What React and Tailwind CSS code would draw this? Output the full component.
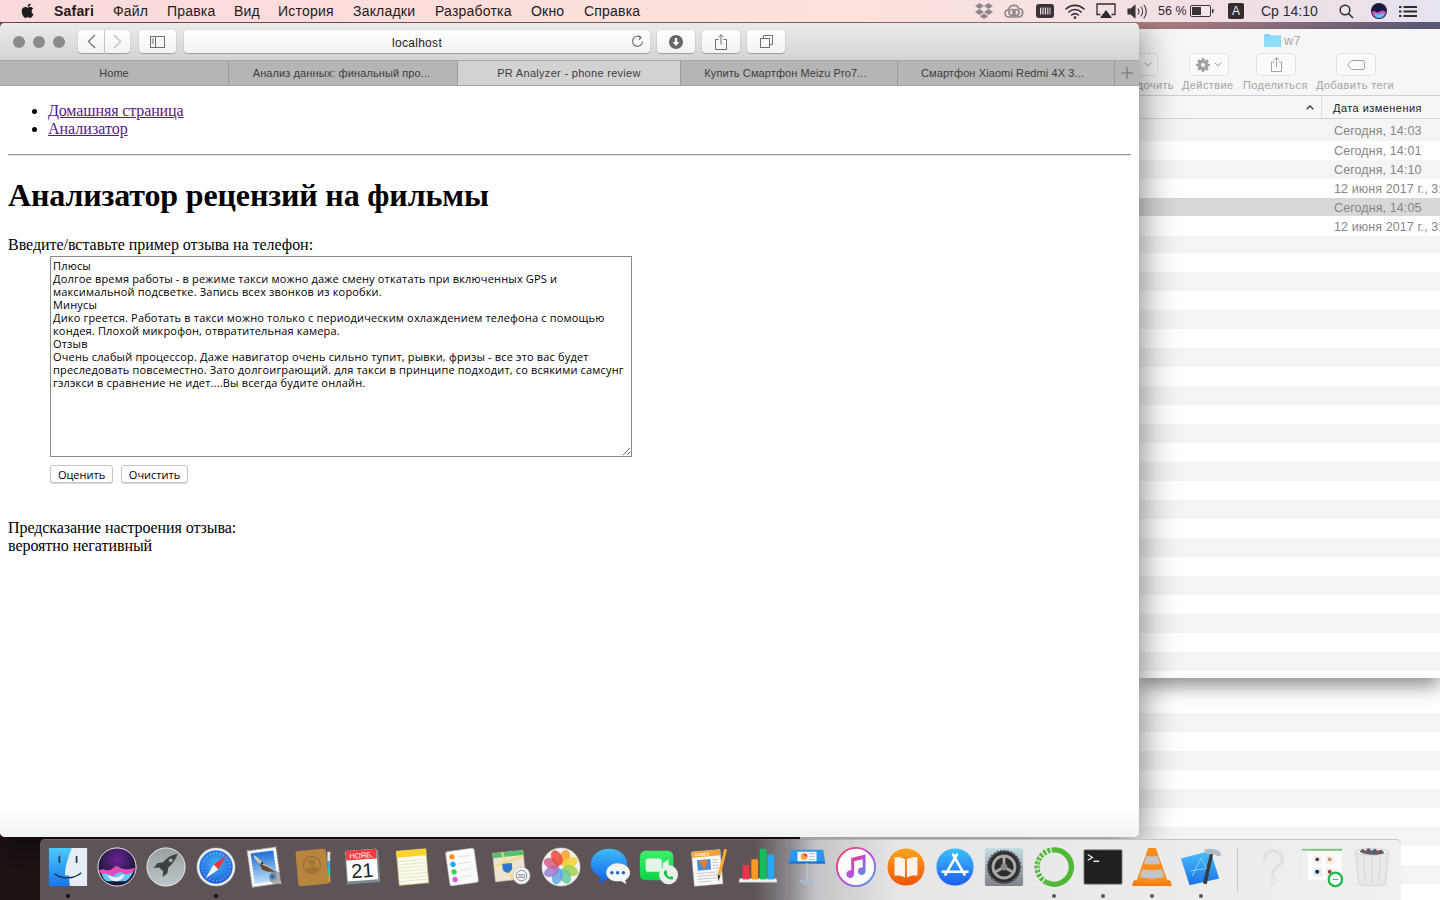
import React from "react";

const serif = "font-['Liberation_Serif',serif]";

const review = `Плюсы
Долгое время работы - в режиме такси можно даже смену откатать при включенных GPS и
максимальной подсветке. Запись всех звонков из коробки.
Минусы
Дико греется. Работать в такси можно только с периодическим охлаждением телефона с помощью
кондея. Плохой микрофон, отвратительная камера.
Отзыв
Очень слабый процессор. Даже навигатор очень сильно тупит, рывки, фризы - все это вас будет
преследовать повсеместно. Зато долгоиграющий. для такси в принципе подходит, со всякими самсунг
гэлэкси в сравнение не идет....Вы всегда будите онлайн.`;

const menuItems = [
  ["Файл", "w-[54px]"],
  ["Правка", "w-[67px]"],
  ["Вид", "w-[44px]"],
  ["История", "w-[75px]"],
  ["Закладки", "w-[82px]"],
  ["Разработка", "w-[96px]"],
  ["Окно", "w-[53px]"],
  ["Справка", "w-[70px]"],
];

function Apple() {
  return (
    <svg width="14" height="16" viewBox="0 0 14 16" fill="#1c1c1c">
      <path d="M10.6 8.4c0-1.9 1.5-2.8 1.6-2.9-.9-1.3-2.2-1.5-2.7-1.5-1.1-.1-2.2.7-2.8.7s-1.5-.7-2.4-.7C3 4 1.9 4.7 1.3 5.8c-1.3 2.2-.3 5.5.9 7.3.6.9 1.3 1.9 2.3 1.8.9 0 1.3-.6 2.4-.6s1.4.6 2.4.6 1.6-.9 2.2-1.8c.7-1 1-2 1-2.1-.1 0-1.9-.7-1.9-2.6zM8.9 2.8c.5-.6.8-1.4.7-2.3-.7 0-1.6.5-2.1 1.1-.5.5-.9 1.4-.8 2.2.8.1 1.7-.4 2.2-1z" />
    </svg>
  );
}

function StatusIcons() {
  return (
    <div className="flex items-center tracking-normal text-[#2e2a2e]">
      <svg width="20" height="18" viewBox="0 0 20 18" fill="#8f8688">
        <path d="M5.5 1 1 4l4.5 3L10 4zM14.5 1 10 4l4.5 3L19 4zM5.5 7 1 10l4.5 3L10 10zM14.5 7 10 10l4.5 3L19 10zM10 11.5 5.800 14.300 10 17l4.200-2.700z" />
      </svg>
      <svg className="ml-[10px]" width="20" height="16" viewBox="0 0 20 16" fill="none" stroke="#8f8688" strokeWidth="1.700">
        <path d="M5 14a3.700 3.700 0 0 1-.5-7.400A5.600 5.600 0 0 1 15 5.500 4.300 4.300 0 0 1 15 14z" />
        <circle cx="8" cy="9.500" r="3" />
        <circle cx="12" cy="9.500" r="3" />
      </svg>
      <svg className="ml-[12px]" width="18" height="14" viewBox="0 0 18 14">
        <rect width="18" height="14" rx="3" fill="#3a3236" />
        <path d="M4 3.500h1.200v7H4zM6.400 3.500h1.200v7H6.400zM8.800 3.500H10v7H8.800zM11.200 3.500h1.200v7h-1.200zM13.600 3.500h.9v7h-.9z" fill="#eadde0" />
      </svg>
      <svg className="ml-[11px]" width="20" height="15" viewBox="0 0 20 15" fill="none" stroke="#2e2a2e" strokeWidth="1.600" strokeLinecap="round">
        <path d="M1 5a13 13 0 0 1 18 0M3.800 8a9 9 0 0 1 12.400 0M6.700 11a5 5 0 0 1 6.600 0" />
        <circle cx="10" cy="13.600" r="0.600" fill="#2e2a2e" />
      </svg>
      <svg className="ml-[11px]" width="20" height="16" viewBox="0 0 20 16" fill="none">
        <path d="M4.500 11.500H1V1h18v10.500h-3.500" stroke="#2e2a2e" strokeWidth="1.300" />
        <path d="M10 7l6 8H4z" fill="#2e2a2e" />
      </svg>
      <svg className="ml-[11px]" width="21" height="15" viewBox="0 0 21 15" fill="none" stroke="#3a3438" strokeWidth="1.100" strokeLinecap="round">
        <path d="M1 5h3l4-3.500v12L4 10H1z" fill="#3a3438" />
        <path d="M11 5a3.500 3.500 0 0 1 0 5M14 3a7 7 0 0 1 0 9M17 1a10.500 10.500 0 0 1 0 13" />
      </svg>
      <span className="ml-[10px] w-[30px] whitespace-nowrap text-[12.500px]">56 %</span>
      <svg width="24" height="12" viewBox="0 0 24 12" className="ml-[2px]">
        <rect x="0.500" y="0.500" width="20" height="11" rx="1.500" fill="#f5e8ea" stroke="#3a3438" />
        <rect x="2" y="2" width="9" height="8" fill="#3a3438" />
        <rect x="22" y="4" width="1.500" height="4" fill="#3a3438" />
      </svg>
      <span className="ml-[14px] flex h-[16px] w-[16px] items-center justify-center rounded-[2px] bg-[#342c30] text-[12px] text-[#f0e8ea]">A</span>
      <span className="ml-[17px] w-[58px] whitespace-nowrap text-[14px]">Ср 14:10</span>
      <svg className="ml-[20px]" width="15" height="15" viewBox="0 0 15 15" fill="none" stroke="#2e2a2e" strokeWidth="1.500">
        <circle cx="6" cy="6" r="4.800" />
        <path d="M9.500 9.500 14 14" />
      </svg>
      <svg className="ml-[17px]" width="16" height="16" viewBox="0 0 16 16">
        <circle cx="8" cy="8" r="8" fill="#1c1640" />
        <path d="M1 9c3-3 4 2 7 0s4-2 7 0c-1 4-4 6-7 6s-6-2-7-6z" fill="#d64bb8" />
        <path d="M3 11c3-2 3 1 6 0s3-1 5-1c-1 3-3 5-6 5s-4-2-5-4z" fill="#58c0ee" />
      </svg>
      <svg className="ml-[12px]" width="18" height="13" viewBox="0 0 18 13" fill="#2e2a2e">
        <path d="M0 1h2.500v2H0zM4.500 1H18v2H4.500zM0 5.500h2.500v2H0zM4.500 5.500H18v2H4.500zM0 10h2.500v2H0zM4.500 10H18v2H4.500z" />
      </svg>
    </div>
  );
}

function ToolBtn({ className = "", children }) {
  return (
    <div className={`flex h-[23px] items-center justify-center rounded-[4px] bg-gradient-to-b from-[#ffffff] to-[#f3f3f3] shadow-[0_1px_1px_rgba(0,0,0,0.25),0_0_0_0.5px_rgba(0,0,0,0.08)] ${className}`}>
      {children}
    </div>
  );
}

const tabs = [
  ["Home", "w-[229px]", "", false],
  ["Анализ данных: финальный про...", "w-[229px] pr-[3px]", "tracking-[0.1px]", false],
  ["PR Analyzer - phone review", "w-[223px]", "tracking-[0.3px]", true],
  ["Купить Смартфон Meizu Pro7...", "w-[217px] pr-[7px]", "tracking-[0.1px]", false],
  ["Смартфон Xiaomi Redmi 4X 3...", "w-[217px] pr-[7px]", "tracking-[0.1px]", false],
];

function Safari() {
  return (
    <div className="absolute left-0 top-[23px] flex h-[814px] w-[1139px] flex-col overflow-hidden rounded-[5px] bg-white shadow-[0_6px_38px_rgba(0,0,0,0.55)]">
      <div className="flex h-[37px] items-center bg-gradient-to-b from-[#ebebeb] to-[#d4d4d4] pl-[13px]">
        <span className="h-[12px] w-[12px] rounded-full bg-[#8a8a8a]" />
        <span className="ml-[8px] h-[12px] w-[12px] rounded-full bg-[#8a8a8a]" />
        <span className="ml-[8px] h-[12px] w-[12px] rounded-full bg-[#8a8a8a]" />
        <ToolBtn className="ml-[13px] w-[26px] rounded-r-none">
          <svg width="9" height="15" viewBox="0 0 9 15" fill="none" stroke="#6f6f6f" strokeWidth="1.200"><path d="M8 1 1.500 7.500 8 14" /></svg>
        </ToolBtn>
        <ToolBtn className="ml-[1px] w-[25px] rounded-l-none">
          <svg width="9" height="15" viewBox="0 0 9 15" fill="none" stroke="#b9b9b9" strokeWidth="1.200"><path d="M1 1l6.500 6.500L1 14" /></svg>
        </ToolBtn>
        <ToolBtn className="ml-[9px] w-[37px]">
          <svg width="15" height="12" viewBox="0 0 15 12" fill="none" stroke="#6f6f6f"><rect x="0.500" y="0.500" width="14" height="11" /><path d="M5.500 0.500v11" /><path d="M1.800 3h2.200M1.800 5h2.200M1.800 7h2.200" /></svg>
        </ToolBtn>
        <ToolBtn className="relative ml-[8px] w-[466px] pt-[2px] text-[12px] tracking-[0.3px] text-[#1a1a1a] font-['Liberation_Sans',sans-serif]">
          localhost
          <svg className="absolute right-[6px] top-[5px]" width="13" height="13" viewBox="0 0 13 13" fill="none" stroke="#666" strokeWidth="1.100"><path d="M9.500 2.300A5 5 0 1 0 11.500 6.500" /><path d="M7 .8 10 2.400 8 4.800" /></svg>
        </ToolBtn>
        <ToolBtn className="ml-[7px] w-[38px]">
          <svg width="14" height="14" viewBox="0 0 14 14"><circle cx="7" cy="7" r="7" fill="#666" /><path d="M5.800 3h2.400v4H10.500L7 11 3.500 7h2.300z" fill="#f6f6f6" /></svg>
        </ToolBtn>
        <ToolBtn className="ml-[7px] w-[38px]">
          <svg width="12" height="16" viewBox="0 0 12 16" fill="none" stroke="#6f6f6f"><path d="M3.500 5.500H.5v10h11v-10h-3" /><path d="M6 10.500V.8M3.500 3 6 .8 8.500 3" /></svg>
        </ToolBtn>
        <ToolBtn className="ml-[7px] w-[38px]">
          <svg width="13" height="13" viewBox="0 0 13 13" fill="none" stroke="#6f6f6f"><rect x="0.500" y="3.500" width="9" height="9" /><path d="M3.500 3.500v-3h9v9h-3" /></svg>
        </ToolBtn>
      </div>
      <div className="flex h-[26px] border-y border-[#a6a6a6] bg-[#b6b5b6] text-[11px] text-[#3c3c3c] font-['Liberation_Sans',sans-serif]">
        {tabs.map(([t, w, tr, active]) => (
          <div key={t} className={`flex items-center justify-center border-r border-[#9a9a9a] ${w} ${tr} ${active ? "bg-[#d3d2d3]" : ""}`}>{t}</div>
        ))}
        <div className="flex flex-1 items-center justify-center">
          <svg width="12" height="12" viewBox="0 0 12 12" stroke="#6c6c6c"><path d="M6 0v12M0 6h12" /></svg>
        </div>
      </div>
      <div className={`flex-1 px-2 text-[16px] leading-[18px] text-black ${serif}`}>
        <ul className="mt-4 list-disc pl-10">
          <li><a className="text-[#551a8b] underline tracking-[-0.12px]">Домашняя страница</a></li>
          <li><a className="text-[#551a8b] underline">Анализатор</a></li>
        </ul>
        <hr className="mt-4 h-[2px] border-y border-t-[#9c9c9c] border-b-[#e4e4e4]" />
        <h1 className="my-[21.440px] text-[32px] font-bold leading-[37px] tracking-[-0.14px]">Анализатор рецензий на фильмы</h1>
        <div className="tracking-[-0.04px]">Введите/вставьте пример отзыва на телефон:</div>
        <textarea
          readOnly
          defaultValue={review}
          className="ml-[42px] mt-[2px] block h-[201px] w-[582px] overflow-hidden whitespace-pre border border-[#8a8a8a] px-[2px] pb-[3px] pt-[2px] text-[11px] leading-[13px] tracking-[0.165px] text-black font-['Open_Sans',sans-serif]"
        />
        <div className="ml-[42px] mt-[8px] flex gap-[8px] text-[11px] font-['Open_Sans',sans-serif]">
          <button className="h-[18px] w-[63px] rounded-[3px] border border-[#c4c4c4] bg-white pb-[2px] shadow-[0_1px_0_rgba(0,0,0,0.15)]">Оценить</button>
          <button className="h-[18px] w-[67px] rounded-[3px] border border-[#c4c4c4] bg-white pb-[2px] shadow-[0_1px_0_rgba(0,0,0,0.15)]">Очистить</button>
        </div>
        <div className="mt-[36px] tracking-[-0.08px]">Предсказание настроения отзыва:</div>
        <div className="tracking-[-0.05px]">вероятно негативный</div>
      </div>
      <div className="h-[28px] bg-gradient-to-b from-white to-[#f1f1f1]" />
    </div>
  );
}

function FinderBtn({ className = "", children }) {
  return <div className={`flex h-[23px] items-center justify-center rounded-[4px] border border-[#e2e2e2] bg-[#fafafa] ${className}`}>{children}</div>;
}

const dates = ["Сегодня, 14:03", "Сегодня, 14:01", "Сегодня, 14:10", "12 июня 2017 г., 3:04", "Сегодня, 14:05", "12 июня 2017 г., 3:04"];
const rowH = ["h-[22px] pt-[3px]", "h-[19px] pt-[2px]", "h-[19px] pt-[2px]", "h-[19px] pt-[2px]", "h-[18px] pt-[2px]", "h-[20px] pt-[2px]", "h-[17px]"];
const filler = Array.from({ length: 22 }, (_, i) => i);

function Finder() {
  return (
    <div className="absolute left-[1139px] top-[29px] flex h-[649px] w-[301px] flex-col overflow-hidden bg-white shadow-[0_8px_18px_rgba(0,0,0,0.45)] font-['Liberation_Sans',sans-serif]">
      <div className="h-[67px] shrink-0 border-b border-[#cfcfcf] bg-[#f6f6f6]">
        <div className="flex h-[24px] items-center pl-[125px] text-[13px] text-[#a8a8a8]">
          <svg width="17" height="13" viewBox="0 0 17 13" className="mt-[-1px]"><path d="M0 1.500C0 .7.500 0 1.300 0h4.200l1.500 1.500h9c.5 0 1 .5 1 1V13H0z" fill="#7fd3f7" /><rect y="2.500" width="17" height="10.500" fill="#8ddcfb" /></svg>
          <span className="ml-[3px]">w7</span>
        </div>
        <div className="flex">
          <FinderBtn className="ml-[-20px] w-[39px] justify-end pr-[5px]">
            <svg width="8" height="5" viewBox="0 0 8 5" fill="none" stroke="#a0a0a0"><path d="M.7.7 4 4 7.300.7" /></svg>
          </FinderBtn>
          <FinderBtn className="ml-[31px] w-[40px] gap-[4px]">
            <svg width="14" height="14" viewBox="0 0 14 14" fill="#a2a2a2"><path d="M6 0h2l.3 1.800 1.300.5L11 1.300l1.700 1.700-1 1.500.5 1.300L14 6v2l-1.800.3-.5 1.300 1 1.400-1.700 1.700-1.400-1-1.300.5L8 14H6l-.3-1.800-1.300-.5-1.400 1L1.300 11l1-1.400-.5-1.300L0 8V6l1.800-.3.5-1.300-1-1.400L3 1.300l1.400 1 1.300-.5z" /><circle cx="7" cy="7" r="2" fill="#f6f6f6" /></svg>
            <svg width="8" height="5" viewBox="0 0 8 5" fill="none" stroke="#a0a0a0"><path d="M.7.7 4 4 7.300.7" /></svg>
          </FinderBtn>
          <FinderBtn className="ml-[27px] w-[40px]">
            <svg width="11" height="15" viewBox="0 0 11 15" fill="none" stroke="#a4a4a4"><path d="M3 5H.5v9.500h10V5H8" /><path d="M5.500 10V.8M3 3 5.500.8 8 3" /></svg>
          </FinderBtn>
          <FinderBtn className="ml-[40px] w-[40px]">
            <svg width="18" height="10" viewBox="0 0 18 10" fill="none" stroke="#a4a4a4"><path d="M4.500.5H16a1.500 1.500 0 0 1 1.500 1.500v6A1.500 1.500 0 0 1 16 9.500H4.500L.7 5z" /></svg>
          </FinderBtn>
        </div>
        <div className="flex whitespace-nowrap pt-[2px] text-[11px] leading-[14px] tracking-[0.4px] text-[#a4a4a4]">
          <div className="flex w-[35px] justify-end overflow-hidden"><span>Упорядочить</span></div>
          <span className="ml-[8px] w-[61px]">Действие</span>
          <span className="w-[73px]">Поделиться</span>
          <span>Добавить теги</span>
        </div>
      </div>
      <div className="flex h-[23px] shrink-0 items-center border-b border-[#d4d4d4] bg-[#f6f6f6] text-[11px] tracking-[0.45px] text-[#222]">
        <div className="flex h-[22px] w-[183px] items-center justify-end border-r border-[#dedede] pr-[7px]">
          <svg width="8" height="5" viewBox="0 0 8 5" fill="none" stroke="#333" strokeWidth="1.300"><path d="M.7 4.300 4 1l3.300 3.300" /></svg>
        </div>
        <span className="ml-[11px] pt-[2px]">Дата изменения</span>
      </div>
      <div className="flex flex-col text-[12.500px] tracking-[0.1px] text-[#858585]">
        {dates.map((d, i) => (
          <div key={i} className={`flex shrink-0 items-center whitespace-nowrap pl-[195px] ${rowH[i]} ${i === 4 ? "bg-[#d8d8d8]" : i % 2 === 0 ? "bg-[#f4f4f4]" : "bg-white"}`}>{d}</div>
        ))}
        <div className={`shrink-0 bg-[#f4f4f4] ${rowH[6]}`} />
        {filler.map((i) => (
          <div key={i} className={`h-[19px] shrink-0 ${i % 2 === 0 ? "bg-white" : "bg-[#f4f4f4]"}`} />
        ))}
      </div>
    </div>
  );
}

function BackWindow() {
  const rows = Array.from({ length: 10 }, (_, i) => i);
  return (
    <div className="absolute left-[800px] top-[656px] flex h-[244px] w-[640px] flex-col bg-white pt-[38px]">
      {rows.map((i) => (
        <div key={i} className={`h-[19px] shrink-0 ${i % 2 === 0 ? "bg-white" : "bg-[#f4f4f4]"}`} />
      ))}
    </div>
  );
}

const I = ({ children }) => (
  <svg width="42" height="42" viewBox="0 0 44 44">{children}</svg>
);

const icons = [
  { dot: "#111", el: (
    <I>
      <defs><linearGradient id="fa" x1="0" y1="0" x2="0" y2="1"><stop offset="0" stopColor="#4ccbfb" /><stop offset="1" stopColor="#1677ec" /></linearGradient></defs>
      <rect x="2" y="2" width="40" height="40" rx="1" fill="url(#fa)" />
      <path d="M25 2h17v40H24c-.5-3-.8-6-.7-11h-4.500c0-10 3.500-19 7.200-29z" fill="#e6eef5" />
      <path d="M13 11v6M31 11v6" stroke="#2b3a4e" strokeWidth="1.800" strokeLinecap="round" />
      <path d="M8 29c7 6 20 6 28-1" fill="none" stroke="#1c2c44" strokeWidth="1.300" />
    </I>
  )},
  { el: (
    <I>
      <defs>
        <radialGradient id="sa" cx=".5" cy=".3" r=".8"><stop offset="0" stopColor="#6a2496" /><stop offset=".55" stopColor="#2a1a4a" /><stop offset="1" stopColor="#10142c" /></radialGradient>
        <filter id="sb"><feGaussianBlur stdDeviation=".7" /></filter>
        <clipPath id="sc"><circle cx="22" cy="22" r="19.500" /></clipPath>
      </defs>
      <circle cx="22" cy="22" r="20" fill="url(#sa)" stroke="#eee" strokeWidth="1" />
      <g clipPath="url(#sc)" filter="url(#sb)">
        <path d="M3 26c5-4 7 1 12-1s5-6 9-3 8 3 17 1c-1 3-3 6-5 8H8c-2-1-4-3-5-5z" fill="#e84cb6" />
        <path d="M6 30c4-3 6 0 10 1s7-5 11-3 7 2 12-1c-2 4-4 8-8 10H12c-3-1-5-4-6-7z" fill="#60c8f4" />
        <path d="M12 31c3-1 5 2 9 2s6-4 9-3c-2 4-5 7-9 7s-7-2-9-6z" fill="#f6f0fa" />
      </g>
    </I>
  )},
  { el: (
    <I>
      <defs><linearGradient id="la" x1="0" y1="0" x2="0" y2="1"><stop offset="0" stopColor="#9aa0a3" /><stop offset="1" stopColor="#bcc6c8" /></linearGradient></defs>
      <circle cx="22" cy="22" r="20" fill="url(#la)" stroke="#eceeee" strokeWidth="1" />
      <path d="M35 8c-7 1-12 4-16 9l-6 1-4 5 6-.5 2 2 2 2-.5 6 5-4 1-6c5-4 8-9 10-15.500z" fill="#3e4245" />
      <circle cx="27" cy="15" r="2" fill="#a4aaad" />
    </I>
  )},
  { dot: "#111", el: (
    <I>
      <defs><radialGradient id="sf" cx=".5" cy=".4" r=".7"><stop offset="0" stopColor="#3bb6f4" /><stop offset="1" stopColor="#1e4fd8" /></radialGradient></defs>
      <circle cx="22" cy="22" r="20" fill="#f2f2f2" stroke="#bbb" strokeWidth=".5" />
      <circle cx="22" cy="22" r="17.500" fill="url(#sf)" />
      <path d="M33 10 19.500 19.500l5 5z" fill="#f0333a" />
      <path d="M11 34l8.500-14.500 5 5z" fill="#f2f2f2" />
      <circle cx="22" cy="22" r="14.500" fill="none" stroke="#a8d4f8" strokeWidth="1.500" strokeDasharray="1 2.600" opacity=".7" />
    </I>
  )},
  { el: (
    <I>
      <defs><linearGradient id="ms" x1="0" y1="0" x2="0" y2="1"><stop offset="0" stopColor="#1f6fd8" /><stop offset="1" stopColor="#bfe0f8" /></linearGradient></defs>
      <g transform="rotate(-8 22 22)">
        <rect x="6" y="3" width="30" height="38" fill="#f8f8f8" stroke="#cfcfcf" strokeWidth="1.200" strokeDasharray="2 1.200" />
        <rect x="9" y="6" width="24" height="32" fill="url(#ms)" />
      </g>
      <path d="M10 10c3 0 7 5 9 8l6 3 9 6-8-1-5-1-3 1 2-6C15 18 11 14 10 10z" fill="#d8caa8" />
      <path d="M16 18l9 4 8 5-8 0-6-2z" fill="#6c4a26" />
      <circle cx="19" cy="18" r="1.200" fill="#3a2a1a" />
      <circle cx="33" cy="33" r="6.500" fill="#5f5558" opacity=".45" stroke="#4b4246" strokeWidth=".6" />
      <circle cx="30" cy="32" r="2.500" fill="#3b6ea5" />
    </I>
  )},
  { el: (
    <I>
      <rect x="36" y="6" width="3" height="10" fill="#dfe1e2" />
      <rect x="36" y="16" width="3" height="8" fill="#3fa7e6" />
      <rect x="36" y="24" width="3" height="8" fill="#42c68a" />
      <rect x="36" y="32" width="3" height="6" fill="#eea12c" />
      <g transform="rotate(-5 20 22)">
        <rect x="4" y="4" width="32" height="37" rx="3" fill="#b8853f" />
        <circle cx="20" cy="20" r="9" fill="none" stroke="#9a6d32" strokeWidth="1.200" />
        <circle cx="20" cy="17" r="3.500" fill="#a1743a" />
        <path d="M13 26c1-6 13-6 14 0-3 3-11 3-14 0z" fill="#a1743a" />
      </g>
    </I>
  )},
  { el: (
    <I>
      <g transform="rotate(-4 22 22)">
        <rect x="4" y="5" width="35" height="34" fill="#7c8a90" />
        <rect x="5" y="4" width="32" height="32" fill="#fff" />
        <rect x="5" y="4" width="32" height="10" fill="#f23a40" />
        <text x="21" y="12.500" textAnchor="middle" fontSize="8" fill="#fff" fontFamily="Liberation Sans, sans-serif">НОЯБ.</text>
        <text x="21" y="33" textAnchor="middle" fontSize="21" fill="#222" fontFamily="Liberation Sans, sans-serif">21</text>
      </g>
    </I>
  )},
  { el: (
    <I>
      <g transform="rotate(-5 22 22)">
        <rect x="6" y="4" width="31" height="36" fill="#fdfbe9" stroke="#c8b860" strokeWidth=".6" />
        <rect x="6" y="4" width="31" height="7" fill="#fbd32c" />
        <path d="M7 15h29M7 18.500h29M7 22h29M7 25.500h29M7 29h29M7 32.500h29M7 36h29" stroke="#d7d3ba" strokeWidth=".6" />
      </g>
    </I>
  )},
  { el: (
    <I>
      <g transform="rotate(-8 22 22)">
        <rect x="7" y="4" width="30" height="36" rx="2" fill="#fbfbfb" stroke="#ccc" strokeWidth=".6" />
        <path d="M18 11h15M18 18h15M18 25h15M18 32h15" stroke="#ddd" strokeWidth=".7" />
        <circle cx="13" cy="10" r="2.800" fill="#f88e1c" />
        <circle cx="13" cy="18" r="2.800" fill="#1ea8f2" />
        <circle cx="13" cy="26" r="2.800" fill="#2ddb4e" />
        <circle cx="13" cy="34" r="2.800" fill="#d65ce0" />
      </g>
    </I>
  )},
  { el: (
    <I>
      <g transform="rotate(-6 20 20)">
        <rect x="4" y="6" width="32" height="30" fill="#ece4cf" stroke="#bbb" strokeWidth=".5" />
        <rect x="4" y="6" width="32" height="5" fill="#52c36a" />
        <path d="M4 20 36 12M14 6l8 30" stroke="#f5d878" strokeWidth="2" />
        <path d="M13 18h10v5c0 3-3 4-5 5-2-1-5-2-5-5z" fill="#2f76d2" />
      </g>
      <circle cx="33" cy="31" r="9" fill="#f4f4f4" stroke="#aaa" strokeWidth=".6" />
      <circle cx="33" cy="31" r="5.500" fill="none" stroke="#7d868c" strokeWidth="1" />
      <text x="33" y="33.500" textAnchor="middle" fontSize="6.500" fill="#667" fontFamily="Liberation Sans, sans-serif">3D</text>
    </I>
  )},
  { el: (
    <I>
      <circle cx="22" cy="22" r="20" fill="#f4f2f2" stroke="#ccc" strokeWidth=".6" />
      {[["#f8a12f", 20], ["#f8d335", 65], ["#a0d24e", 110], ["#68c9a0", 155], ["#62a8e8", 200], ["#9a80d0", 245], ["#d0608c", 290], ["#f04a3a", 335]].map(([c, a]) => (
        <ellipse key={a} cx="22" cy="11.500" rx="5.500" ry="8.500" fill={c} opacity=".85" transform={`rotate(${a} 22 22)`} />
      ))}
    </I>
  )},
  { el: (
    <I>
      <defs><linearGradient id="ma" x1="0" y1="0" x2="0" y2="1"><stop offset="0" stopColor="#3cbcfa" /><stop offset="1" stopColor="#1264e6" /></linearGradient></defs>
      <path d="M21 3c11 0 19 7 19 16 0 5-3 9-7 11-3 3-9 5-14 4-3 3-6 4-9 4 2-2 2.500-4 2-6C5 29 2 24 2 19 2 10 10 3 21 3z" fill="url(#ma)" />
      <path d="M30 18c7 0 13 4 13 10 0 3-2 6-5 8l1 4-5-3H30c-7 0-12-4-12-9s5-10 12-10z" fill="#f2f6fa" />
      <circle cx="24" cy="28" r="1.800" fill="#2766ba" />
      <circle cx="30" cy="28" r="1.800" fill="#2766ba" />
      <circle cx="36" cy="28" r="1.800" fill="#2766ba" />
    </I>
  )},
  { el: (
    <I>
      <defs><linearGradient id="fc" x1="0" y1="0" x2="0" y2="1"><stop offset="0" stopColor="#3ef06a" /><stop offset="1" stopColor="#0ed048" /></linearGradient></defs>
      <rect x="2" y="5" width="35" height="31" rx="6" fill="url(#fc)" />
      <rect x="8" y="13" width="17" height="14" rx="3" fill="#e4f5e8" />
      <path d="M26 18l6-4v12l-6-4z" fill="#e4f5e8" />
      <circle cx="32" cy="30" r="10" fill="#e8eeea" />
      <path d="M28 26c1-1 2-.5 2.500 1s-.5 2 0 3 2 2.500 3 2.500 1.500-1.200 2.500-.5 1.500 1.500.5 2.500-4 1-7-2-3-5-1.500-6.500z" fill="#16c24a" />
    </I>
  )},
  { el: (
    <I>
      <g transform="rotate(-5 20 22)">
        <rect x="5" y="5" width="30" height="36" fill="#f8f8f5" stroke="#c8c8c8" strokeWidth=".5" />
        <rect x="5" y="5" width="30" height="6" fill="#f3a132" />
        <text x="8" y="10" fontSize="4.500" fontWeight="700" fill="#fff" fontFamily="Liberation Sans, sans-serif">PAGES</text>
        <rect x="10" y="14" width="14" height="11" fill="#4a8fd8" />
        <path d="M12 15h10l-5 9z" fill="#ef7c22" />
        <path d="M9 28h22M9 31h22M9 34h22M9 37h14M26 15h6M26 18h6M26 21h6M26 24h6" stroke="#bbb" strokeWidth=".8" />
      </g>
      <path d="M38 3l3 1-7 27-3-1z" fill="#f4a93a" />
      <path d="M31 30l3 1-2 6z" fill="#333" />
    </I>
  )},
  { el: (
    <I>
      <path d="M3 34h38l1 4H2z" fill="#f0f0f0" stroke="#ccc" strokeWidth=".4" />
      <rect x="6" y="20" width="7" height="15" fill="#f0324e" />
      <rect x="15" y="14" width="7" height="21" fill="#f79a1d" />
      <rect x="24" y="3" width="7" height="32" fill="#16bd5c" />
      <rect x="32" y="9" width="7" height="26" fill="#26a6f0" />
    </I>
  )},
  { el: (
    <I>
      <path d="M5 4h34l2 14H3z" fill="#2996f0" />
      <rect x="3" y="16" width="38" height="2.500" fill="#1a76d0" />
      <rect x="12" y="6" width="20" height="10" fill="#f4f6f8" />
      <circle cx="19" cy="11" r="3.500" fill="#f2a52c" />
      <path d="M19 11V7.500A3.500 3.500 0 0 1 22.500 11z" fill="#e24a6a" />
      <path d="M24 8h6M24 11h6M24 14h6" stroke="#9ab" strokeWidth=".7" />
      <rect x="21" y="18" width="2.200" height="17" fill="#b4c2cc" />
      <ellipse cx="22" cy="37" rx="8" ry="2.800" fill="#a8bcc8" />
    </I>
  )},
  { el: (
    <I>
      <defs><linearGradient id="it" x1="0" y1="0" x2="1" y2="1"><stop offset="0" stopColor="#f8404e" /><stop offset=".5" stopColor="#c04ad8" /><stop offset="1" stopColor="#36a8f2" /></linearGradient></defs>
      <circle cx="22" cy="22" r="20" fill="#fbfbfb" stroke="url(#it)" strokeWidth="2" />
      <path d="M17 12.500 32 9v17.500a4 4 0 1 1-3-3.900V14l-9 2v13.500a4 4 0 1 1-3-3.900z" fill="url(#it)" />
    </I>
  )},
  { el: (
    <I>
      <defs><linearGradient id="ib" x1="0" y1="0" x2="0" y2="1"><stop offset="0" stopColor="#fca61e" /><stop offset="1" stopColor="#f2520c" /></linearGradient></defs>
      <circle cx="22" cy="22" r="20" fill="url(#ib)" stroke="#eee" strokeWidth="1" />
      <path d="M21 14c-3-2-7-2.500-11-2v19c4-.5 8 0 11 2zM23 14c3-2 7-2.500 11-2v19c-4-.5-8 0-11 2z" fill="#faf3ec" />
    </I>
  )},
  { el: (
    <I>
      <defs><linearGradient id="as" x1="0" y1="0" x2="0" y2="1"><stop offset="0" stopColor="#3cc2fa" /><stop offset="1" stopColor="#1c5cf0" /></linearGradient></defs>
      <circle cx="22" cy="22" r="20" fill="url(#as)" stroke="#e8e8e8" strokeWidth="1" />
      <path d="M24 9 12 30M20 9l12 21M9 27h26" stroke="#fff" strokeWidth="2.800" strokeLinecap="round" fill="none" />
    </I>
  )},
  { el: (
    <I>
      <defs><linearGradient id="sp" x1="0" y1="0" x2="0" y2="1"><stop offset="0" stopColor="#c4dce4" /><stop offset="1" stopColor="#7c8488" /></linearGradient></defs>
      <rect x="2" y="2" width="40" height="40" rx="2" fill="url(#sp)" />
      <circle cx="22" cy="22" r="17" fill="#2e2e30" />
      <circle cx="22" cy="22" r="17" fill="none" stroke="#55555a" strokeWidth="2.400" strokeDasharray="2 1.600" />
      <circle cx="22" cy="22" r="11.500" fill="none" stroke="#a8a8aa" strokeWidth="3" />
      <path d="M22 22V11M22 22l9.500 5.500M22 22l-9.500 5.500" stroke="#a8a8aa" strokeWidth="3" />
      <circle cx="22" cy="22" r="3.500" fill="#8a8a8c" />
    </I>
  )},
  { dot: "#555", el: (
    <I>
      <path d="M22 4a18 18 0 1 1-8 34" fill="none" stroke="#4eb935" strokeWidth="5.500" />
      <path d="M14 38A18 18 0 0 1 22 4" fill="none" stroke="#4eb935" strokeWidth="5.500" strokeDasharray="3 1.500" />
      <path d="M12 36.500A18 18 0 0 1 19 4.500" fill="none" stroke="#f0f0f0" strokeWidth=".8" strokeDasharray="2 3" />
    </I>
  )},
  { dot: "#555", el: (
    <I>
      <rect x="2" y="4" width="40" height="36" rx="1" fill="#202020" stroke="#8a9094" strokeWidth=".8" />
      <path d="M6 9l5 3-5 3" fill="none" stroke="#f2f2f2" strokeWidth="1.200" />
      <path d="M12 16h6" stroke="#f2f2f2" strokeWidth="1.500" />
    </I>
  )},
  { dot: "#555", el: (
    <I>
      <path d="M3 36h38l2 6H1z" fill="#f27e12" />
      <path d="M18 2h8l12 34c-5 4-27 4-32 0z" fill="#f88d1c" />
      <path d="M16 10c3 1.500 9 1.500 12 0l2.500 8c-4 2-13 2-17 0zM12 24c4 2 16 2 20 0l3 8c-6 3-20 3-26 0z" fill="#c4c4c6" />
    </I>
  )},
  { dot: "#555", el: (
    <I>
      <defs><linearGradient id="xc" x1="0" y1="0" x2="0" y2="1"><stop offset="0" stopColor="#4ac0fa" /><stop offset="1" stopColor="#1a72ea" /></linearGradient></defs>
      <path d="M1 13 32 5l9 29-31 7z" fill="url(#xc)" />
      <path d="M22 13 13 31M22 13l9 15M11 26l20-3" stroke="#8fd0f8" strokeWidth="1" fill="none" />
      <path d="M32 6l3 1-7 33-4-1z" fill="#3a3a3c" />
      <path d="M25 4c5-2 13-1 17 2l1 4-3 1-4-2-8-1z" fill="#aebcc4" />
    </I>
  )},
];

const rightIcons = [
  <I key="h">
    <path d="M13 14c0-5 4-9 9-9s10 3 10 9c0 4-3 6-6 8-3 1.500-4 4-4 9" fill="none" stroke="#e0e0e0" strokeWidth="3.500" strokeLinecap="round" />
    <rect x="19.500" y="35" width="5" height="5" rx="1" fill="none" stroke="#e0e0e0" strokeWidth="1.200" />
  </I>,
  <I key="p">
    <rect x="1" y="3" width="42" height="33" fill="#fbfbfb" stroke="#e6e6e6" strokeWidth=".5" />
    <rect x="1" y="3" width="42" height="2" fill="#7cc57c" />
    <rect x="1" y="5" width="6" height="31" fill="#efefef" />
    <rect x="13" y="10" width="9" height="9" fill="#f4f0ec" />
    <rect x="26" y="10" width="9" height="9" fill="#f4f0ec" />
    <rect x="13" y="23" width="9" height="9" fill="#e8ecf0" />
    <rect x="26" y="23" width="9" height="9" fill="#f4f0ec" />
    <circle cx="17" cy="14" r="2" fill="#5a4038" />
    <circle cx="30" cy="14" r="2" fill="#c8936a" />
    <circle cx="17" cy="27" r="2.200" fill="#24324a" />
    <circle cx="30" cy="27" r="2" fill="#a04040" />
    <circle cx="36" cy="35" r="7" fill="#fff" stroke="#22b84a" strokeWidth="2.400" />
    <rect x="33" y="34.500" width="6" height="1.200" fill="#3ea8e8" />
  </I>,
  <I key="t">
    <path d="M5 6h34l-3 34c-4 2-24 2-28 0z" fill="#e8e8e8" stroke="#ccc" strokeWidth=".8" />
    <path d="M13 10l2 29M22 10v30M31 10l-2 29" stroke="#d4d4d4" strokeWidth="1" />
    <ellipse cx="22" cy="6" rx="17" ry="3.500" fill="#f6f6f6" stroke="#bbb" strokeWidth=".6" />
    <path d="M9 6l3-3 3 2 3-3 4 3 3-2 3 2 4-1 3 3c-5 3-20 3-26-1z" fill="#5c5c62" />
    <path d="M15 4l3 1-1 2zM26 4l3 1-2 2z" fill="#d24a4a" />
    <path d="M20 4l3 1-1 2z" fill="#3a8ad8" />
  </I>,
];

function Dock() {
  return (
    <div className="absolute left-[40px] top-[839px] flex h-[61px] w-[1361px] rounded-t-[5px] border-t border-[#8d8588]/40 bg-[linear-gradient(90deg,#5e5457_0%,#5e5457_52.500%,#8a868c_55%,#c4c3c7_57%,#e6e6e6_63%,#f0f0f0_100%)] pl-[3px]">
      {icons.map((ic, i) => (
        <div key={i} className="flex w-[49.300px] shrink-0 flex-col items-center pt-[6px]">
          {ic.el}
          <div className="mt-[6px] h-[4px] w-[4px] rounded-full" style={{ background: ic.dot || "transparent" }} />
        </div>
      ))}
      <div className="flex w-[22.200px] shrink-0 justify-center pt-[8px]">
        <div className="h-[44px] w-px bg-[#c8c8c8]" />
      </div>
      {rightIcons.map((el, i) => (
        <div key={i} className="flex w-[49.300px] shrink-0 flex-col items-center pt-[6px]">{el}</div>
      ))}
    </div>
  );
}

export default function App() {
  return (
    <div className="relative h-[900px] w-[1440px] overflow-hidden bg-[linear-gradient(90deg,#8a4a48_0%,#b98586_79%,#5b5a7a_100%)] bg-no-repeat font-['Liberation_Sans',sans-serif]">
      <div className="absolute inset-x-0 bottom-0 top-[29px] bg-[#1c1313]" />
      <BackWindow />
      <Finder />
      <Safari />
      <div className="relative flex h-[22px] items-center justify-between bg-[linear-gradient(90deg,#f8dada_0%,#fde2de_60%,#f0dfe4_85%,#e6e2ee_100%)] pl-[21px] pr-[23px] text-[14px] tracking-[0.2px] text-[#1e1a1c]">
        <div className="flex items-center">
          <Apple />
          <span className="ml-[19px] w-[59px] font-bold">Safari</span>
          {menuItems.map(([t, w]) => (
            <span key={t} className={w}>{t}</span>
          ))}
        </div>
        <StatusIcons />
      </div>
      <Dock />
    </div>
  );
}
